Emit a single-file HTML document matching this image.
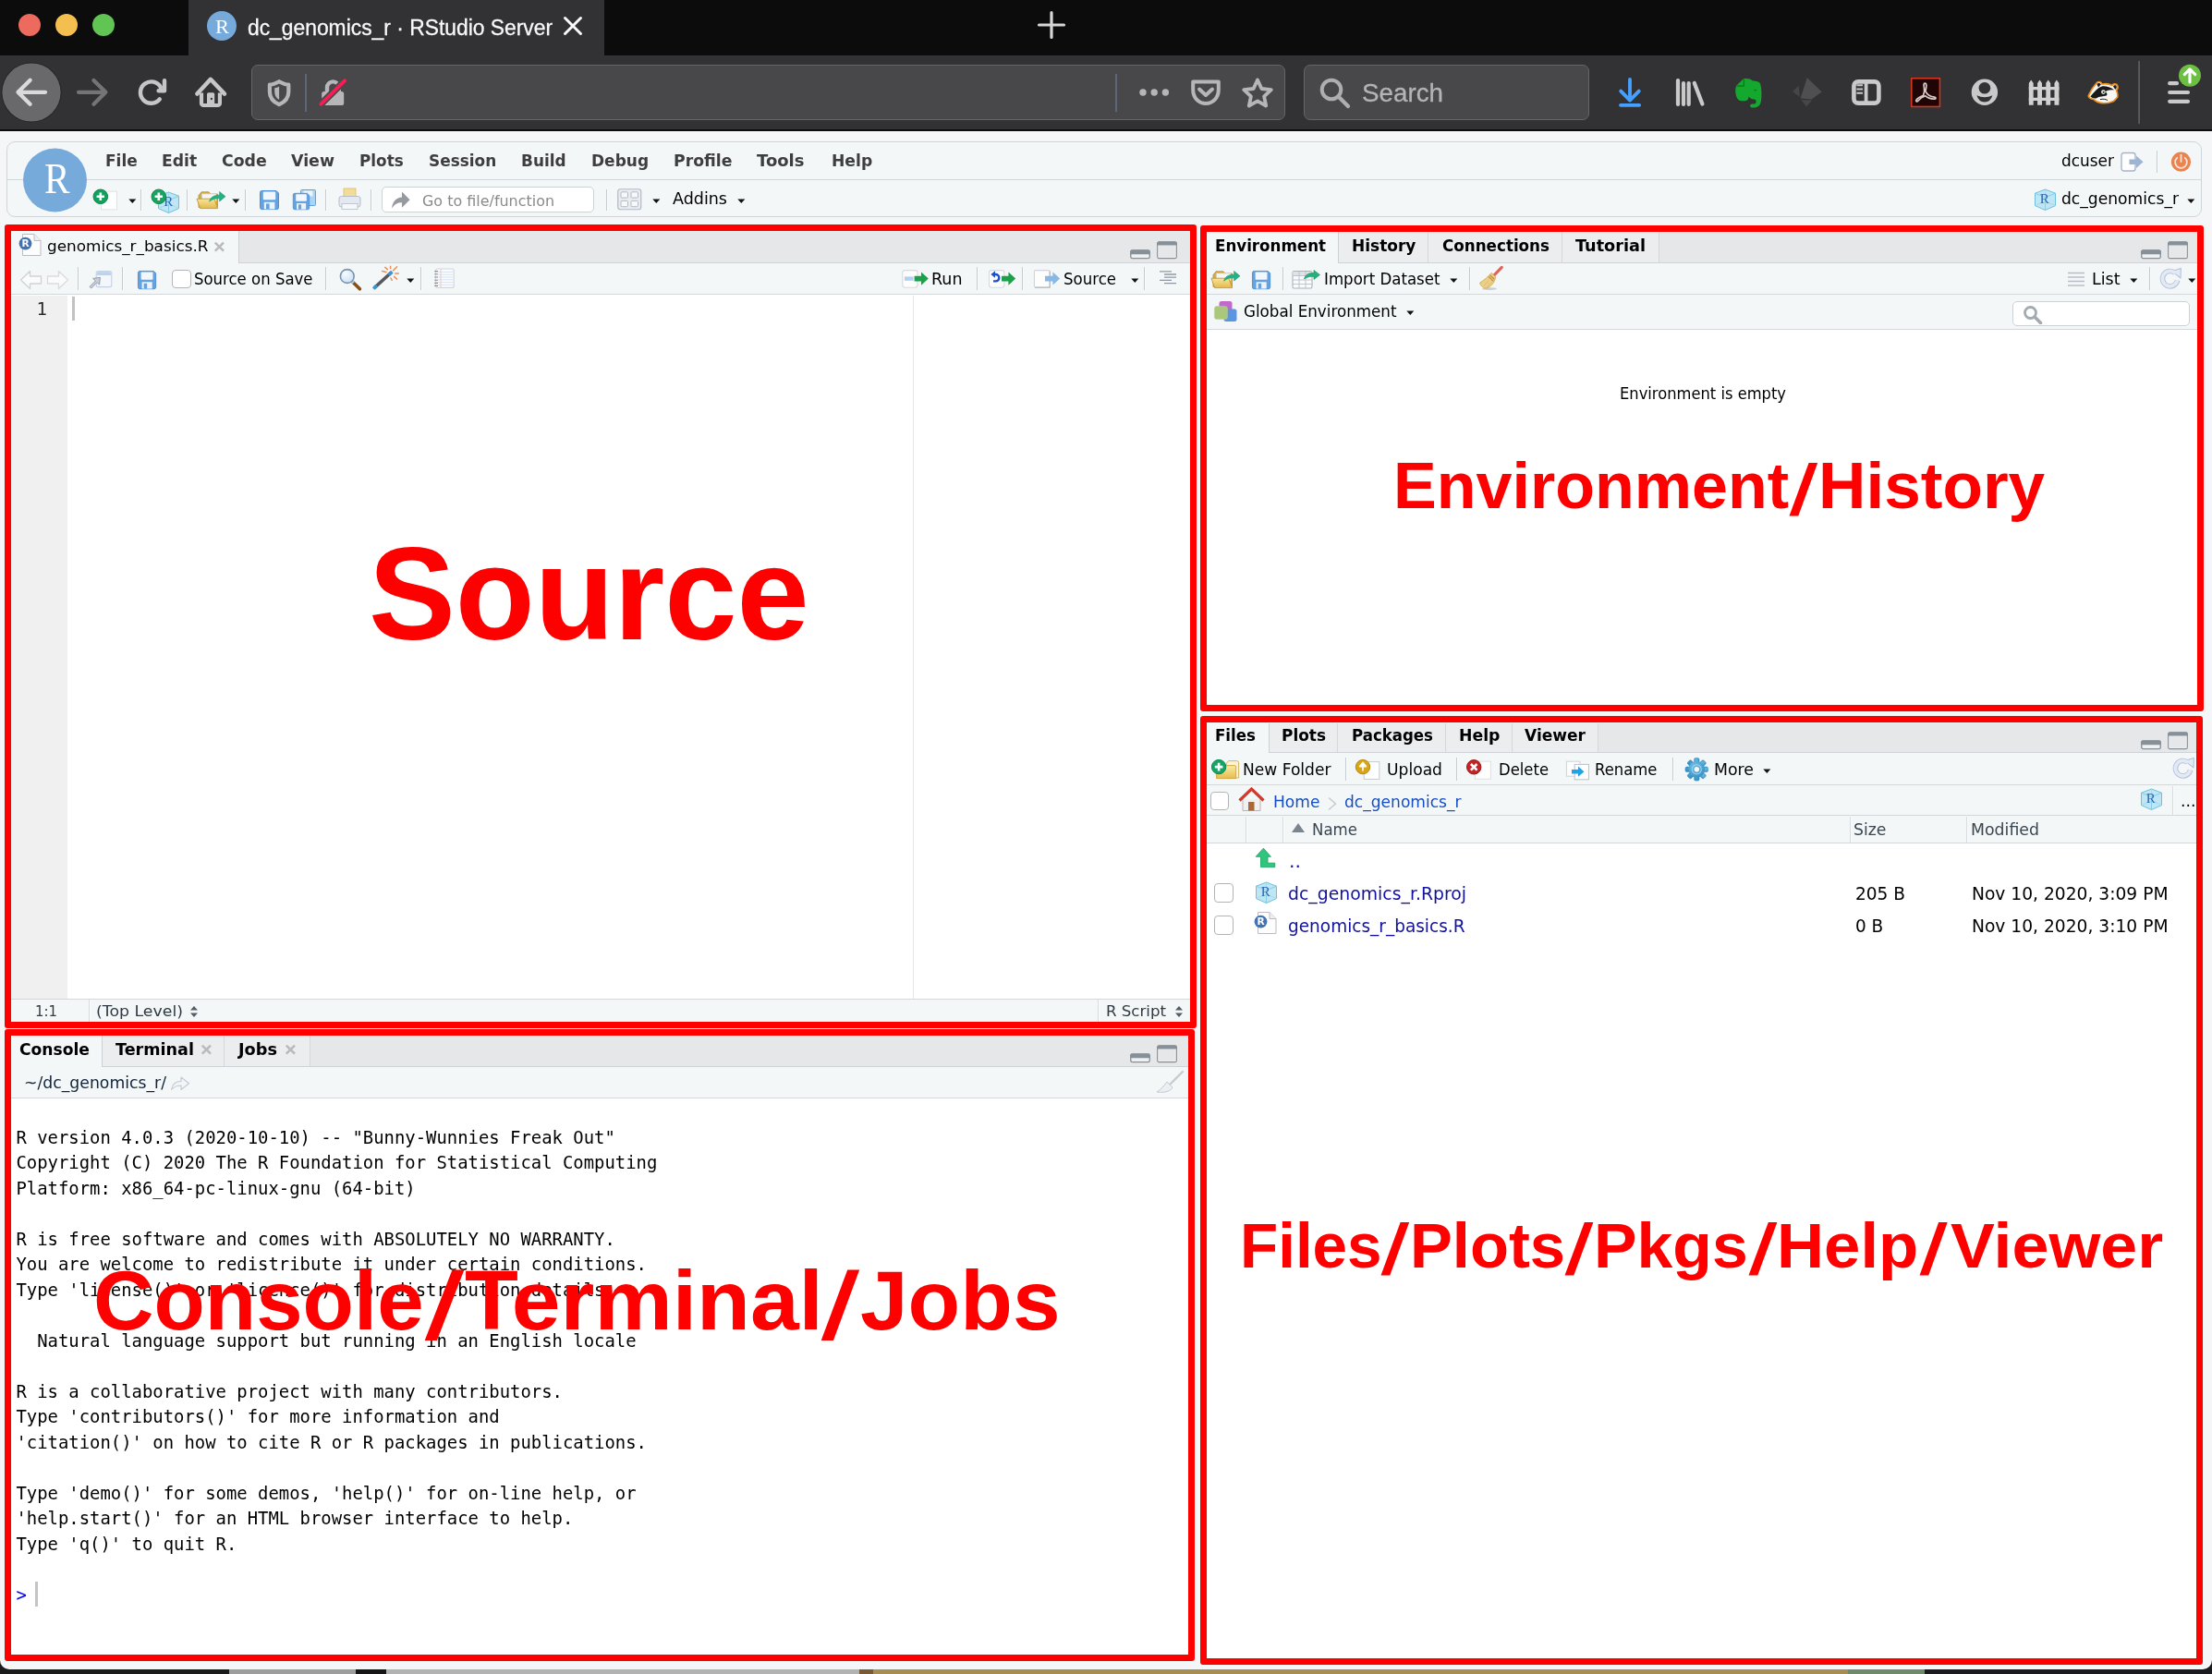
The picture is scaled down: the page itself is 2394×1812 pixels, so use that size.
<!DOCTYPE html>
<html lang="en"><head><meta charset="utf-8"><title>dc_genomics_r · RStudio Server</title>
<style>
html,body{margin:0;padding:0}
body{width:2394px;height:1812px;position:relative;overflow:hidden;background:#1c1c1e;will-change:transform;-webkit-font-smoothing:antialiased}
.a{position:absolute;box-sizing:border-box}
.t{position:absolute;white-space:pre;line-height:0;transform-origin:0 0;display:block}
.f-ui{font-family:"DejaVu Sans","Liberation Sans",sans-serif;font-weight:400}
.f-uib{font-family:"DejaVu Sans","Liberation Sans",sans-serif;font-weight:700}
.f-sf{font-family:"Liberation Sans",sans-serif;font-weight:400}
.f-sfb{font-family:"Liberation Sans",sans-serif;font-weight:700}
.f-mono{font-family:"DejaVu Sans Mono","Liberation Mono",monospace;font-weight:400}
.f-serif{font-family:"Liberation Serif",serif;font-weight:400}

</style></head>
<body>
<div id="desktop" aria-label="Desktop background">
<div class="a" style="left:0px;top:1800px;width:2394px;height:12px;background:linear-gradient(90deg,#1b1b1c 0,#1b1b1c 248px,#9d9d9d 248px,#9d9d9d 385px,#151515 385px,#151515 418px,#b2b2b2 418px,#b2b2b2 930px,#7a5a34 930px,#7a5a34 945px,#a88d52 945px,#a88d52 2000px,#6f8a6a 2000px,#6f8a6a 2083px,#1b1b1f 2083px);"></div>
</div>
<header id="browser-chrome" aria-label="Firefox window chrome">
<div class="a" style="left:0px;top:0px;width:2394px;height:60px;background:#0c0c0d;"></div>
<div class="a" style="left:204px;top:0px;width:450px;height:60px;background:#323234;"></div>
<div class="a" style="left:0px;top:60px;width:2394px;height:80px;background:#323234;"></div>
<div class="a" style="left:0px;top:140px;width:2394px;height:2px;background:#0c0c0d;"></div>
<div class="a" style="left:0px;top:142px;width:2394px;height:1665px;background:#f4f6f7;border-radius:0 0 10px 10px;"></div>
<svg class="a" style="left:0px;top:0px;" width="204" height="60" viewBox="0 0 204 60"><circle cx="32" cy="27" r="12" fill="#ed6a5e"/><circle cx="72" cy="27" r="12" fill="#f5bf4f"/><circle cx="112" cy="27" r="12" fill="#61c554"/></svg>
<svg class="a" style="left:224px;top:12px;" width="32" height="32" viewBox="0 0 32 32"><circle cx="16" cy="16" r="16" fill="#75aadb"/></svg>
<span class="t f-serif" id="t0" style="left:232.5px;top:29px;font-size:22px;color:#fff;transform:scaleX(1.0213);">R</span>
<span class="t f-sf" id="t1" style="left:268.0px;top:29.5px;font-size:24.4px;color:#f9f9fa;transform:scaleX(0.9363);-webkit-text-stroke:0.3px #f9f9fa;">dc_genomics_r · RStudio Server</span>
<svg class="a" style="left:608px;top:16px;" width="24" height="24" viewBox="0 0 24 24"><path d="M3.5 3.5L20.5 20.5M20.5 3.5L3.5 20.5" stroke="#f9f9fa" stroke-width="3" stroke-linecap="round" fill="none"/></svg>
<svg class="a" style="left:1120px;top:9px;" width="36" height="36" viewBox="0 0 36 36"><path d="M18 4.5V31.5M4.5 18H31.5" stroke="#d7d7d8" stroke-width="3.2" stroke-linecap="round" fill="none"/></svg>
<svg class="a" style="left:0px;top:60px;" width="2394" height="80" viewBox="0 0 2394 80"><circle cx="34" cy="40" r="32.6" fill="#252527"/><circle cx="34" cy="40" r="31.6" fill="#69696b"/><path d="M49 39.8H20M32.6 26.8L19.5 39.8L32.6 52.8" stroke="#dadadb" stroke-width="4.3" stroke-linecap="round" stroke-linejoin="round" fill="none"/><path d="M85 39.8H114M101.4 27L114.4 39.8L101.4 52.8" stroke="#747477" stroke-width="4.2" stroke-linecap="round" stroke-linejoin="round" fill="none"/><path d="M172.8 47.4A11.7 11.7 0 1 1 174 34.6" stroke="#c6c6c7" stroke-width="4.4" fill="none" stroke-linecap="round"/><path d="M178 27.2V38.2H171.6" fill="none" stroke="#c6c6c7" stroke-width="4.4" stroke-linejoin="round" stroke-linecap="round"/><path d="M213.4 41.6L227.9 25.8L243 41.6" stroke="#c6c6c7" stroke-width="4.5" fill="none" stroke-linecap="round" stroke-linejoin="round"/><path d="M218 40.6V51.7a2.3 2.3 0 0 0 2.3 2.3H235.6a2.3 2.3 0 0 0 2.3-2.3V40.6" stroke="#c6c6c7" stroke-width="4.2" fill="none"/><rect x="224" y="40.2" width="8.2" height="13" rx="1.6" fill="#c6c6c7"/><circle cx="228.9" cy="47" r="1.15" fill="#323234"/></svg>
<div class="a" style="left:272px;top:70px;width:1119px;height:60px;background:#48484a;border:1px solid #666668;border-radius:7px;"></div>
<svg class="a" style="left:272px;top:71px;" width="120" height="59" viewBox="0 0 120 59"><path d="M30.1 17.2C26 19.6 22.4 20.6 19.9 20.6V28.5C19.9 35 24 39.5 30.1 42.2C36.2 39.5 40.3 35 40.3 28.5V20.6C37.8 20.6 34.2 19.6 30.1 17.2Z" fill="none" stroke="#b6b6b8" stroke-width="4.2" stroke-linejoin="round"/><path d="M30.1 22.6V37C27 35.2 25.2 32.6 25.2 28.6V24.2C27 24.2 28.6 23.6 30.1 22.6Z" fill="#b6b6b8"/><path d="M82 31V23.8a6.4 6.4 0 0 1 12.8 0V31" fill="none" stroke="#b6b6b8" stroke-width="4.4"/><rect x="76.2" y="28" width="24" height="15" rx="2.6" fill="#b6b6b8"/><path d="M75.4 41.6L101 16.4" stroke="#48484a" stroke-width="7.4" stroke-linecap="round"/><path d="M75.4 41.6L101 16.4" stroke="#ff1a53" stroke-width="3.9" stroke-linecap="round"/></svg>
<div class="a" style="left:330.4px;top:79.5px;width:1.5px;height:41.0px;background:#5e6778;"></div>
<div class="a" style="left:1207.4px;top:79.5px;width:1.5px;height:41.0px;background:#5e6778;"></div>
<svg class="a" style="left:1230px;top:92px;" width="40" height="16" viewBox="0 0 40 16"><circle cx="7" cy="8" r="3.7" fill="#b6b6b8"/><circle cx="19.2" cy="8" r="3.7" fill="#b6b6b8"/><circle cx="31.4" cy="8" r="3.7" fill="#b6b6b8"/></svg>
<svg class="a" style="left:1287px;top:84px;" width="36" height="32" viewBox="0 0 36 32"><path d="M4.2 4.4H31.8V13C31.8 22 25.5 28 18 28C10.5 28 4.2 22 4.2 13Z" fill="none" stroke="#b6b6b8" stroke-width="4" stroke-linejoin="round"/><path d="M11 12.5L18 19L25 12.5" fill="none" stroke="#b6b6b8" stroke-width="4" stroke-linecap="round" stroke-linejoin="round"/></svg>
<svg class="a" style="left:1343px;top:83px;" width="36" height="35" viewBox="0 0 36 35"><path d="M18 3.5L22.4 13L32.8 14.2L25.1 21.3L27.2 31.5L18 26.4L8.8 31.5L10.9 21.3L3.2 14.2L13.6 13Z" fill="none" stroke="#b6b6b8" stroke-width="3.8" stroke-linejoin="round"/></svg>
<div class="a" style="left:1411px;top:70px;width:309px;height:60px;background:#48484a;border:1px solid #666668;border-radius:7px;"></div>
<svg class="a" style="left:1427px;top:83px;" width="36" height="36" viewBox="0 0 36 36"><circle cx="14" cy="14" r="10.3" fill="none" stroke="#aeaeb0" stroke-width="4"/><path d="M22 22L32 32" stroke="#aeaeb0" stroke-width="4.2" stroke-linecap="round"/></svg>
<span class="t f-sf" id="t2" style="left:1474.0px;top:101px;font-size:27px;color:#b4b4b6;transform:scaleX(1.0285);-webkit-text-stroke:0.3px #b4b4b6;">Search</span>
<svg class="a" style="left:1740px;top:60px;" width="654" height="80" viewBox="0 0 654 80"><path d="M24 26V48M14.2 38.6L24 48.6L33.8 38.6" stroke="#45a1ff" stroke-width="3.8" fill="none" stroke-linecap="round" stroke-linejoin="round"/><path d="M14 53.8H34.2" stroke="#45a1ff" stroke-width="3.8" stroke-linecap="round"/><path d="M76 27V53M82 30V53M87.7 30V53M93.8 30L102.4 52.6" stroke="#c9c9ca" stroke-width="4.2" stroke-linecap="round"/><path d="M147 25.2L139.4 32.6C137.6 36 138 42 140 46.2C141.6 49 145 49.6 148.4 49.2C151.6 48.8 152.6 46.6 152.4 44.4C153.6 46 155.4 47.2 158.4 47.6C161.4 48 161.2 52 159 52.4H156.4C153.6 52.4 153.4 56 156 56.4C161.2 57.2 165.2 55 166 49C166.8 43 166.6 36 165.2 31C164.4 28.4 160.6 27.6 157 27.6C155 25.2 150 24.6 147 25.2Z" fill="#15a82e"/><path d="M147.4 25.6V33H139.6" fill="none" stroke="#0b7a1c" stroke-width="1.3"/><ellipse cx="159.8" cy="37.6" rx="1.5" ry="0.9" fill="#0b7a1c"/><path d="M215.8 24L231.7 39.6L220.6 47.4L208.6 46.5Z" fill="#4f4f51"/><path d="M200.1 39L206.7 32.4L207.7 45Z" fill="#464648"/><path d="M209.2 48L221.2 48.6L215.2 55.5Z" fill="#464648"/><rect x="266.4" y="28.4" width="27" height="23.2" rx="4.6" fill="none" stroke="#c9c9ca" stroke-width="4.6"/><path d="M279.6 28V52" stroke="#c9c9ca" stroke-width="3.8"/><path d="M269.4 32.2H276M269.4 36.5H276M269.4 40.8H276" stroke="#c9c9ca" stroke-width="1.9"/><rect x="328.8" y="24.8" width="30.6" height="30.6" fill="#210405" stroke="#d5351f" stroke-width="1.6"/><path d="M343.2 30.2C345.6 30.2 345 34.6 343.8 38.6C346 43 350 44.8 353.6 45.2C355.6 45.4 355.4 47.4 353.2 47.2C349.2 46.8 345.6 45.4 343.8 43.8C341 44.6 338 46.4 336 49C334.8 50.6 333 49.8 334 48.2C335.6 45.8 339 44.2 341.6 43.2C342.6 40.8 343 37.8 342.4 34.4C341.8 31.8 342 30.2 343.2 30.2Z" fill="none" stroke="#d8cbc9" stroke-width="1.7"/><circle cx="407.9" cy="39.8" r="14.2" fill="#c9c9ca"/><circle cx="407.9" cy="35.2" r="6.3" fill="#323234"/><path d="M399.4 43.2Q407.9 47.4 416.4 43.2Q414.4 50.4 407.9 50.4Q401.4 50.4 399.4 43.2Z" fill="#323234"/><path d="M455.8 30L458.2 26.4L460.7 30V53.8H455.8ZM465.1 30L467.5 26.4L470 30V53.8H465.1ZM474.3 30L476.7 26.4L479.2 30V53.8H474.3ZM483.5 30L485.9 26.4L488.4 30V53.8H483.5Z" fill="#d0d0d1"/><path d="M455.8 35.6H488.4M455.8 47.4H488.4" stroke="#d0d0d1" stroke-width="3.4"/><g transform="translate(519,27)"><path d="M9.5 3.5C11.5 0.5 15 1 16 4C20 3.2 24 3.8 27 5.4C28.5 3 32.5 3.4 33 6.6C33.4 8.4 32.4 9.8 31.6 10.6C32.8 13.4 33 16.4 32.6 18.4C31 19.6 30.4 21.4 28.4 22.4C24 24.6 18 25 14.4 24.4C11 23.8 8.6 22.4 6.6 20.4C3.6 20.2 1 18.6 1.4 16.4C3.4 11.6 6 7.4 9.5 3.5Z" fill="#f8f6f2" stroke="#ec8a1c" stroke-width="1.7" stroke-linejoin="round"/><path d="M10.4 4.2C11.6 2.4 14 2.6 14.8 4.6L12 7.6ZM28 6.4C29.4 4.6 32 5.2 31.8 7.4C31.6 8.6 30.8 9.4 30.2 9.8Z" fill="#1a1a1a"/><path d="M3.4 17.6C7 12.6 12 7.4 16.4 6.2C21 6 25.6 7.4 29.4 10.6C25 9.8 21.6 10.6 19.6 12.4C21.4 13.2 22 15.2 20.8 16.6C17.6 17.2 13 17.4 9.6 19.4C7.6 19.8 5 19.2 3.4 17.6Z" fill="#1a1a1a"/><circle cx="17.4" cy="12.6" r="2.3" fill="#f8f6f2"/><circle cx="17.6" cy="12.8" r="1" fill="#1a1a1a"/><path d="M14 20.6C17 19.8 20.4 20.4 22 21.6" stroke="#1a1a1a" stroke-width="1" fill="none"/></g><rect x="574.2" y="6" width="1.8" height="68" fill="#5c5c5e"/><path d="M608.2 30.2H616M608.2 40H628M608.2 49.8H628" stroke="#c9c9ca" stroke-width="4.2" stroke-linecap="round"/><circle cx="630" cy="21.8" r="12" fill="#6cbf43"/><path d="M630 29V15.4M624.2 20.6L630 14.8L635.8 20.6" stroke="#fff" stroke-width="3.1" fill="none" stroke-linecap="round" stroke-linejoin="round"/></svg>
</header>
<main id="rstudio" aria-label="RStudio Server">
<nav id="rstudio-toolbar" aria-label="RStudio menu and toolbar">
<div class="a" style="left:7px;top:153px;width:2376.2px;height:82px;background:#f4f7f8;border:1px solid #d0d5d9;border-radius:9px;"></div>
<div class="a" style="left:8px;top:194px;width:2375px;height:1px;background:#d0d5d9;"></div>
<svg class="a" style="left:24px;top:160px;" width="72" height="72" viewBox="0 0 72 72"><circle cx="35.5" cy="35" r="34.5" fill="#75aadb"/></svg>
<span class="t f-serif" id="t3" style="left:47.5px;top:193.6px;font-size:46px;color:#fff;transform:scaleX(0.8961);">R</span>
<span class="t f-uib" id="t4" style="left:113.5px;top:173.6px;font-size:17px;color:#3e3e3e;transform:scaleX(0.9972);">File</span>
<span class="t f-uib" id="t5" style="left:175.0px;top:173.6px;font-size:17px;color:#3e3e3e;transform:scaleX(1.0119);">Edit</span>
<span class="t f-uib" id="t6" style="left:239.5px;top:173.6px;font-size:17px;color:#3e3e3e;transform:scaleX(1.0176);">Code</span>
<span class="t f-uib" id="t7" style="left:315.0px;top:173.6px;font-size:17px;color:#3e3e3e;transform:scaleX(1.0235);">View</span>
<span class="t f-uib" id="t8" style="left:389.0px;top:173.6px;font-size:17px;color:#3e3e3e;transform:scaleX(0.9892);">Plots</span>
<span class="t f-uib" id="t9" style="left:463.5px;top:173.6px;font-size:17px;color:#3e3e3e;transform:scaleX(0.9942);">Session</span>
<span class="t f-uib" id="t10" style="left:564.0px;top:173.6px;font-size:17px;color:#3e3e3e;transform:scaleX(0.9961);">Build</span>
<span class="t f-uib" id="t11" style="left:640.0px;top:173.6px;font-size:17px;color:#3e3e3e;">Debug</span>
<span class="t f-uib" id="t12" style="left:729.0px;top:173.6px;font-size:17px;color:#3e3e3e;transform:scaleX(1.0147);">Profile</span>
<span class="t f-uib" id="t13" style="left:819.0px;top:173.6px;font-size:17px;color:#3e3e3e;transform:scaleX(1.0584);">Tools</span>
<span class="t f-uib" id="t14" style="left:900.0px;top:173.6px;font-size:17px;color:#3e3e3e;transform:scaleX(1.0099);">Help</span>
<svg class="a" style="left:100px;top:204px;" width="30" height="26" viewBox="0 0 30 26"><rect x="9.5" y="3.2" width="17" height="19.6" fill="#fff" stroke="#dfe2e5" stroke-width="1"/><circle cx="8.8" cy="8.8" r="7.8" fill="#12a05c" stroke="#0d8a4c" stroke-width="1"/><path d="M8.8 4.6V13M4.6 8.8H13" stroke="#fff" stroke-width="2.6"/></svg>
<svg class="a" style="left:139px;top:215px;" width="9" height="6" viewBox="0 0 9 6"><path d="M0.3 0.6H8.3L4.3 5Z" fill="#111"/></svg>
<div class="a" style="left:152px;top:205px;width:1px;height:23px;background:#c6cbd0;box-shadow:1px 0 0 rgba(255,255,255,0.55);"></div>
<svg class="a" style="left:170px;top:207px;" width="25.0" height="24.5" viewBox="0 0 25 24.5"><path d="M12.5 1L23.5 5.2V18.6L12.5 23.5L1.5 18.6V5.2Z" fill="#bfe6f4" stroke="#6cc0de" stroke-width="1"/><path d="M1.5 5.2L12.5 9.6L23.5 5.2M12.5 9.6V23.5" fill="none" stroke="#7fcbe5" stroke-width="0.9"/><path d="M12.5 1V14L1.5 18.6M12.5 14L23.5 18.6" fill="none" stroke="#9ad6ea" stroke-width="0.7"/></svg>
<span class="t f-serif" id="t15" style="left:177.2px;top:218.2px;font-size:15.0px;color:#2b65b5;">R</span>
<svg class="a" style="left:163px;top:204px;" width="18" height="18" viewBox="0 0 18 18"><circle cx="8.8" cy="8.8" r="7.8" fill="#1aa260" stroke="#0d8a4c" stroke-width="1"/><path d="M8.8 4.6V13M4.6 8.8H13" stroke="#fff" stroke-width="2.6"/></svg>
<div class="a" style="left:202px;top:205px;width:1px;height:23px;background:#c6cbd0;box-shadow:1px 0 0 rgba(255,255,255,0.55);"></div>
<svg class="a" style="left:212px;top:203px;" width="33" height="26" viewBox="0 0 33 26"><defs><linearGradient id="fg" x1="0" y1="0" x2="0" y2="1"><stop offset="0" stop-color="#f9e596"/><stop offset="1" stop-color="#e2b94e"/></linearGradient></defs><path d="M3 8.5L6 4.8H14L16 7H23.5V21.5H3Z" fill="#d6ad45" stroke="#b98f28" stroke-width="0.8"/><path d="M6.5 6.8H22V15H6.5Z" fill="#f6f6f6" stroke="#cfcfcf" stroke-width="0.7"/><path d="M1 12.2H19.8L23.6 22.6H4.6Z" fill="url(#fg)" stroke="#c49a2c" stroke-width="0.9" stroke-linejoin="round"/><path d="M14.6 15.2C15.6 10.4 20 8 25.6 8.2V4.4L32 9.7L25.6 15V11.8C21.4 11.5 17.6 12.6 14.6 15.2Z" fill="#24b183" stroke="#149a6c" stroke-width="0.6"/></svg>
<svg class="a" style="left:251px;top:215px;" width="9" height="6" viewBox="0 0 9 6"><path d="M0.3 0.6H8.3L4.3 5Z" fill="#111"/></svg>
<div class="a" style="left:265px;top:205px;width:1px;height:23px;background:#c6cbd0;box-shadow:1px 0 0 rgba(255,255,255,0.55);"></div>
<svg class="a" style="left:280px;top:205px;" width="23.0" height="24.0" viewBox="0 0 23 24"><path d="M1.5 3.5A2 2 0 0 1 3.5 1.5H19L21.5 4V19.6a2 2 0 0 1-2 2H3.5A2 2 0 0 1 1.5 19.6Z" fill="#65a3e0" stroke="#4f8fd6" stroke-width="1"/><rect x="4.8" y="2.6" width="13.4" height="8.6" rx="0.8" fill="#f2f7fd"/><rect x="5.8" y="13.8" width="11.6" height="7.6" fill="#edf3fb"/><rect x="8" y="15.4" width="3.6" height="6" fill="#65a3e0"/></svg>
<svg class="a" style="left:316px;top:204px;" width="27" height="25" viewBox="0 0 27 25"><rect x="9.5" y="1.5" width="16" height="17" rx="1" fill="#a9d5f5" stroke="#5ba3de" stroke-width="1"/><rect x="12.5" y="2.5" width="10" height="6" fill="#eaf4fd"/><g transform="translate(0,4) scale(0.87)"><path d="M1.5 3.5A2 2 0 0 1 3.5 1.5H19L21.5 4V19.6a2 2 0 0 1-2 2H3.5A2 2 0 0 1 1.5 19.6Z" fill="#65a3e0" stroke="#4f8fd6" stroke-width="1"/><rect x="4.8" y="2.6" width="13.4" height="8.6" rx="0.8" fill="#f2f7fd"/><rect x="5.8" y="13.8" width="11.6" height="7.6" fill="#edf3fb"/><rect x="8" y="15.4" width="3.6" height="6" fill="#65a3e0"/></g></svg>
<div class="a" style="left:352px;top:205px;width:1px;height:23px;background:#c6cbd0;box-shadow:1px 0 0 rgba(255,255,255,0.55);"></div>
<svg class="a" style="left:366px;top:203px;" width="25" height="26" viewBox="0 0 25 26"><rect x="6" y="1" width="13" height="10" fill="#f3dc9a" stroke="#d8bd6c" stroke-width="0.8"/><rect x="1" y="9.5" width="23" height="11.5" rx="2.5" fill="#e4e8ef" stroke="#b5bdca" stroke-width="1"/><rect x="4" y="17.5" width="17" height="6" fill="#f5f7fa" stroke="#b5bdca" stroke-width="0.8"/></svg>
<div class="a" style="left:401px;top:205px;width:1px;height:23px;background:#c6cbd0;box-shadow:1px 0 0 rgba(255,255,255,0.55);"></div>
<div class="a" style="left:412.5px;top:202px;width:230.0px;height:27.5px;background:#fff;border:1px solid #cdd2d6;border-radius:5px;"></div>
<svg class="a" style="left:423px;top:206px;" width="22" height="21" viewBox="0 0 22 21"><path d="M1 19.5C2 12 6 8 12 7.6V1.5L20.6 10.2L12 18.8V13.2C7 13.2 4 15 1 19.5Z" fill="#96999f"/></svg>
<span class="t f-ui" id="t16" style="left:456.5px;top:217.7px;font-size:15.5px;color:#8a8a8a;transform:scaleX(1.0283);">Go to file/function</span>
<div class="a" style="left:656px;top:205px;width:1px;height:23px;background:#c6cbd0;box-shadow:1px 0 0 rgba(255,255,255,0.55);"></div>
<svg class="a" style="left:668px;top:204px;" width="27" height="24" viewBox="0 0 27 24"><rect x="0.75" y="0.75" width="25" height="22" rx="2.5" fill="#e9ecf1" stroke="#b3bac6" stroke-width="1.2"/><rect x="4" y="3.8" width="7.5" height="6.3" rx="1" fill="#f7f8fa" stroke="#b3bac6"/><rect x="15" y="3.8" width="7.5" height="6.3" rx="1" fill="#f7f8fa" stroke="#b3bac6"/><rect x="4" y="13.4" width="7.5" height="6.3" rx="1" fill="#f7f8fa" stroke="#b3bac6"/><rect x="15" y="13.4" width="7.5" height="6.3" rx="1" fill="#f7f8fa" stroke="#b3bac6"/></svg>
<svg class="a" style="left:706px;top:215px;" width="9" height="6" viewBox="0 0 9 6"><path d="M0.3 0.6H8.3L4.3 5Z" fill="#111"/></svg>
<span class="t f-ui" id="t17" style="left:727.5px;top:215px;font-size:17px;color:#000;transform:scaleX(1.03);">Addins</span>
<svg class="a" style="left:797.5px;top:215px;" width="9" height="6" viewBox="0 0 9 6"><path d="M0.3 0.6H8.3L4.3 5Z" fill="#111"/></svg>
<span class="t f-ui" id="t18" style="left:2231.0px;top:173.6px;font-size:17px;color:#000;transform:scaleX(0.9962);">dcuser</span>
<svg class="a" style="left:2295px;top:164px;" width="26" height="23" viewBox="0 0 26 23"><rect x="1" y="1.5" width="15" height="19.5" rx="2.5" fill="#fdfdfe" stroke="#a6b4cb" stroke-width="1.4"/><path d="M9.5 8.5H17V4.5L24.5 11.2L17 18V14H9.5Z" fill="#9db4d2"/></svg>
<div class="a" style="left:2334px;top:163px;width:1px;height:24px;background:#c6cbd0;box-shadow:1px 0 0 rgba(255,255,255,0.55);"></div>
<svg class="a" style="left:2349px;top:164px;" width="23" height="23" viewBox="0 0 23 23"><circle cx="11.5" cy="11.2" r="10.6" fill="#e9834f"/><path d="M7.2 6.8A6.4 6.4 0 1 0 15.8 6.8" fill="none" stroke="#fbe3d3" stroke-width="1.8" stroke-linecap="round"/><path d="M11.5 3.6V11" stroke="#fbe3d3" stroke-width="1.8" stroke-linecap="round"/></svg>
<svg class="a" style="left:2200.5px;top:203.5px;" width="25.0" height="24.5" viewBox="0 0 25 24.5"><path d="M12.5 1L23.5 5.2V18.6L12.5 23.5L1.5 18.6V5.2Z" fill="#bfe6f4" stroke="#6cc0de" stroke-width="1"/><path d="M1.5 5.2L12.5 9.6L23.5 5.2M12.5 9.6V23.5" fill="none" stroke="#7fcbe5" stroke-width="0.9"/><path d="M12.5 1V14L1.5 18.6M12.5 14L23.5 18.6" fill="none" stroke="#9ad6ea" stroke-width="0.7"/></svg>
<span class="t f-serif" id="t19" style="left:2207.7px;top:214.7px;font-size:15.0px;color:#2b65b5;">R</span>
<span class="t f-ui" id="t20" style="left:2231.0px;top:215px;font-size:17px;color:#000;transform:scaleX(1.0076);">dc_genomics_r</span>
<svg class="a" style="left:2367px;top:215px;" width="9" height="6" viewBox="0 0 9 6"><path d="M0.3 0.6H8.3L4.3 5Z" fill="#111"/></svg>
</nav>
<section id="source-pane" aria-label="Source">
<div class="a" style="left:12px;top:250px;width:1276px;height:856px;background:#fff;"></div>
<div class="a" style="left:12px;top:250px;width:1276px;height:34.5px;background:#e6e7e9;"></div>
<div class="a" style="left:12px;top:283.5px;width:1276px;height:1.0px;background:#cfd3d7;"></div>
<div class="a" style="left:12px;top:250px;width:246.5px;height:34.5px;background:#f4f7f8;border-right:1px solid #cdd1d5;"></div>
<span class="t f-ui" id="t21" style="left:51.0px;top:266.5px;font-size:16.6px;color:#000;transform:scaleX(1.0151);">genomics_r_basics.R</span>
<svg class="a" style="left:19px;top:251.5px;" width="27" height="26" viewBox="0 0 27 26"><path d="M5.5 1.5H18L25 8.5V24.5H5.5Z" fill="#fdfdfd" stroke="#b9bcc0" stroke-width="1"/><path d="M18 1.5V8.5H25" fill="#eceef0" stroke="#b9bcc0" stroke-width="1"/><circle cx="8.5" cy="11.6" r="6.9" fill="#4272b4"/></svg>
<span class="t f-uib" id="t22" style="left:23.6px;top:262.8px;font-size:10.6px;color:#fff;">R</span>
<svg class="a" style="left:231px;top:260.5px;" width="13" height="12" viewBox="0 0 13 12"><path d="M1.8 1.6L11 10.6M11 1.6L1.8 10.6" stroke="#bababa" stroke-width="2.5" fill="none"/></svg>
<svg class="a" style="left:1223px;top:269.7px;" width="23" height="11" viewBox="0 0 23 11"><rect x="0.75" y="0.95" width="20.5" height="8.6" rx="1.6" fill="#eff0f2" stroke="#869098" stroke-width="1.3"/><path d="M0.2 5.2V2.6A2.2 2.2 0 0 1 2.4 0.4H19.6A2.2 2.2 0 0 1 21.8 2.6V5.2Z" fill="#869098"/></svg>
<svg class="a" style="left:1252px;top:260.7px;" width="23" height="20" viewBox="0 0 23 20"><rect x="0.75" y="0.95" width="20.5" height="17.6" rx="1.6" fill="none" stroke="#869098" stroke-width="1.3"/><rect x="1.9" y="4.4" width="18.2" height="13" fill="none" stroke="#f1f2f3" stroke-width="0.8"/><path d="M0.2 4.4V2.6A2.2 2.2 0 0 1 2.4 0.4H19.6A2.2 2.2 0 0 1 21.8 2.6V4.4Z" fill="#869098"/></svg>
<div class="a" style="left:12px;top:284.5px;width:1276px;height:34.0px;background:#f4f7f8;border-bottom:1px solid #d3d7da;"></div>
<svg class="a" style="left:21px;top:291.2px;" width="26" height="24" viewBox="0 0 26 24"><path d="M1.5 12L11.5 2.5V8H23.5V16H11.5V21.5Z" fill="#fbfbfb" stroke="#cfd2d5" stroke-width="1.3" stroke-linejoin="round"/></svg>
<svg class="a" style="left:49px;top:291.2px;" width="26" height="24" viewBox="0 0 26 24"><path d="M24.5 12L14.5 2.5V8H2.5V16H14.5V21.5Z" fill="#fbfbfb" stroke="#d9dcde" stroke-width="1.3" stroke-linejoin="round"/></svg>
<div class="a" style="left:84px;top:289px;width:1px;height:25px;background:#c6cbd0;box-shadow:1px 0 0 rgba(255,255,255,0.55);"></div>
<svg class="a" style="left:95px;top:292px;" width="28" height="22" viewBox="0 0 28 22"><rect x="9.2" y="1.6" width="16.6" height="17" rx="2.2" fill="#f3f6fa" stroke="#c3d0e2" stroke-width="1.1"/><path d="M9.8 4.2A2 2 0 0 1 11.8 2.2H23.2A2 2 0 0 1 25.2 4.2V6H9.8Z" fill="#b9d4f1"/><path d="M2 18.4L8.4 12L5.6 9.4L13.4 8.4L12.6 16.2L10 13.6L3.8 20Z" fill="#c9cfd9" stroke="#8b95a6" stroke-width="0.9" stroke-linejoin="round"/></svg>
<div class="a" style="left:132px;top:289px;width:1px;height:25px;background:#c6cbd0;box-shadow:1px 0 0 rgba(255,255,255,0.55);"></div>
<svg class="a" style="left:148px;top:291.8px;" width="22.1" height="23.0" viewBox="0 0 23 24"><path d="M1.5 3.5A2 2 0 0 1 3.5 1.5H19L21.5 4V19.6a2 2 0 0 1-2 2H3.5A2 2 0 0 1 1.5 19.6Z" fill="#65a3e0" stroke="#4f8fd6" stroke-width="1"/><rect x="4.8" y="2.6" width="13.4" height="8.6" rx="0.8" fill="#f2f7fd"/><rect x="5.8" y="13.8" width="11.6" height="7.6" fill="#edf3fb"/><rect x="8" y="15.4" width="3.6" height="6" fill="#65a3e0"/></svg>
<div class="a" style="left:186px;top:291.5px;width:20.5px;height:20.5px;background:#fff;border:1px solid #b4b4b4;border-radius:4px;"></div>
<span class="t f-ui" id="t23" style="left:210.0px;top:302px;font-size:17px;color:#000;transform:scaleX(0.9727);">Source on Save</span>
<div class="a" style="left:352px;top:289px;width:1px;height:25px;background:#c6cbd0;box-shadow:1px 0 0 rgba(255,255,255,0.55);"></div>
<svg class="a" style="left:365px;top:288px;" width="28" height="28" viewBox="0 0 28 28"><defs><radialGradient id="lg" cx="0.35" cy="0.3" r="0.8"><stop offset="0" stop-color="#f6fbff"/><stop offset="1" stop-color="#c9def5"/></radialGradient></defs><path d="M16.2 16.8L24.4 24.8" stroke="#8a4f14" stroke-width="3.6" stroke-linecap="round"/><path d="M15.4 16L17.6 18.2" stroke="#9fd0ea" stroke-width="3.4"/><circle cx="10.8" cy="11" r="7.4" fill="url(#lg)" stroke="#7a94ab" stroke-width="1.6"/></svg>
<svg class="a" style="left:401px;top:286px;" width="34" height="30" viewBox="0 0 34 30"><path d="M4.4 25.4L22.4 9" stroke="#56585c" stroke-width="3.5"/><path d="M3.2 26.5L6.8 23.2" stroke="#3f93cf" stroke-width="3.7"/><path d="M19.6 11.6L23.4 8.2" stroke="#3f93cf" stroke-width="3.7"/><path d="M15.8 3.4L18.4 5.6M21.6 2.2V4.6M24.6 6.8L28.6 2.8M26.6 10H30.4M25.6 13.4L28.6 16.2M22 15L23.2 17.4M12.6 7.4L17 8.4" stroke="#f58b4c" stroke-width="1.5" stroke-linecap="round"/></svg>
<svg class="a" style="left:440px;top:301px;" width="9" height="6" viewBox="0 0 9 6"><path d="M0.3 0.6H8.3L4.3 5Z" fill="#111"/></svg>
<div class="a" style="left:455px;top:289px;width:1px;height:25px;background:#c6cbd0;box-shadow:1px 0 0 rgba(255,255,255,0.55);"></div>
<svg class="a" style="left:469px;top:290.4px;" width="24" height="23" viewBox="0 0 24 23"><rect x="2.6" y="1" width="19.6" height="20.4" rx="2" fill="#fbfcfe" stroke="#d2d5d9" stroke-width="1.1"/><path d="M4 4.4H21.6M4 7.2H21.6M4 10H21.6M4 12.8H21.6M4 15.6H21.6M4 18.4H21.6" stroke="#d3e0f3" stroke-width="0.9"/><path d="M8 1.5V21" stroke="#f3b9b0" stroke-width="0.8"/><path d="M1.2 3.6H5M1.2 6.8H5M1.2 10H5M1.2 13.2H5M1.2 16.4H5M1.2 19.4H5" stroke="#8d9299" stroke-width="1.1"/></svg>
<svg class="a" style="left:975px;top:291px;" width="34" height="22" viewBox="0 0 34 22"><rect x="1.8" y="1.6" width="16.2" height="18.6" rx="2.6" fill="#fdfdfe" stroke="#d6dade" stroke-width="1.1"/><rect x="4" y="8.4" width="9.6" height="4.4" fill="#b3cff3"/><path d="M14.6 7.8H22V3.4L29.8 10.6L22 17.8V13.4H14.6Z" fill="#19a24a"/></svg>
<span class="t f-ui" id="t24" style="left:1008.0px;top:302px;font-size:17px;color:#000;transform:scaleX(1.0273);">Run</span>
<div class="a" style="left:1057px;top:289px;width:1px;height:25px;background:#c6cbd0;box-shadow:1px 0 0 rgba(255,255,255,0.55);"></div>
<svg class="a" style="left:1069px;top:291px;" width="33" height="22" viewBox="0 0 33 22"><rect x="1.5" y="1.6" width="16.4" height="18.6" rx="2.6" fill="#fdfdfe" stroke="#d6dade" stroke-width="1.1"/><path d="M6 13.4H8.6A3.7 3.7 0 0 0 8.6 6H6.4" fill="none" stroke="#1c50cf" stroke-width="2.4"/><path d="M8 2.2L3.4 6L8 9.8Z" fill="#1c50cf"/><path d="M15 7.8H22.4V3.4L30.2 10.6L22.4 17.8V13.4H15Z" fill="#19a24a"/></svg>
<div class="a" style="left:1106px;top:289px;width:1px;height:25px;background:#c6cbd0;box-shadow:1px 0 0 rgba(255,255,255,0.55);"></div>
<svg class="a" style="left:1118px;top:291px;" width="31" height="22" viewBox="0 0 31 22"><rect x="1.4" y="1.6" width="16.8" height="18.6" rx="1.6" fill="#fdfdfe" stroke="#d0d4d9" stroke-width="1.1"/><path d="M2 20.2H18.2V2.4" fill="none" stroke="#b3b9c1" stroke-width="1.2"/><path d="M13 7.8H21.4V3.6L29.2 10.6L21.4 17.6V13.4H13Z" fill="#86b9e6"/></svg>
<span class="t f-ui" id="t25" style="left:1151.0px;top:302px;font-size:17px;color:#000;transform:scaleX(0.9762);">Source</span>
<svg class="a" style="left:1224px;top:301px;" width="9" height="6" viewBox="0 0 9 6"><path d="M0.3 0.6H8.3L4.3 5Z" fill="#111"/></svg>
<div class="a" style="left:1238px;top:289px;width:1px;height:25px;background:#c6cbd0;box-shadow:1px 0 0 rgba(255,255,255,0.55);"></div>
<svg class="a" style="left:1254px;top:292px;" width="20" height="17" viewBox="0 0 20 17"><path d="M1 1.8H14M6 5H19M6 8.2H19M1 11.4H14M6 14.6H19" stroke="#8d99a4" stroke-width="1.3"/></svg>
<div class="a" style="left:12px;top:319.5px;width:61px;height:761.5px;background:#f0f0f0;"></div>
<span class="t f-mono" id="t26" style="left:39.55px;top:333.6px;font-size:19px;color:#2b2b2b;">1</span>
<div class="a" style="left:78.2px;top:320.5px;width:2.4px;height:26.5px;background:#c2c2c2;"></div>
<div class="a" style="left:988px;top:319.5px;width:1px;height:761.5px;background:#e4e6e8;"></div>
<div class="a" style="left:12px;top:1081px;width:1276px;height:25px;background:#f4f7f8;border-top:1px solid #d3d7da;"></div>
<span class="t f-ui" id="t27" style="left:38.0px;top:1094.6px;font-size:16.6px;color:#2f3a42;transform:scaleX(0.8982);">1:1</span>
<div class="a" style="left:96px;top:1082px;width:1px;height:24px;background:#d8dcdf;box-shadow:1px 0 0 rgba(255,255,255,0.55);"></div>
<span class="t f-ui" id="t28" style="left:104.0px;top:1094.6px;font-size:16.6px;color:#2f3a42;transform:scaleX(1.0441);">(Top Level)</span>
<svg class="a" style="left:205px;top:1088px;" width="10" height="14" viewBox="0 0 10 14"><path d="M1 5.6L5 1L9 5.6ZM1 8.4L5 13L9 8.4Z" fill="#555d66"/></svg>
<div class="a" style="left:1188px;top:1082px;width:1px;height:24px;background:#d8dcdf;box-shadow:1px 0 0 rgba(255,255,255,0.55);"></div>
<span class="t f-ui" id="t29" style="left:1197.0px;top:1094.6px;font-size:16.6px;color:#2f3a42;">R Script</span>
<svg class="a" style="left:1270.5px;top:1088px;" width="10" height="14" viewBox="0 0 10 14"><path d="M1 5.6L5 1L9 5.6ZM1 8.4L5 13L9 8.4Z" fill="#555d66"/></svg>
</section>
<section id="console-pane" aria-label="Console">
<div class="a" style="left:12px;top:1121px;width:1274px;height:671px;background:#fff;"></div>
<div class="a" style="left:12px;top:1121px;width:1274px;height:33.5px;background:#e6e7e9;"></div>
<div class="a" style="left:12px;top:1153.5px;width:1274px;height:1.0px;background:#cfd3d7;"></div>
<div class="a" style="left:12px;top:1121px;width:98.5px;height:33.5px;background:#f4f7f8;border-right:1px solid #cdd1d5;"></div>
<span class="t f-uib" id="t30" style="left:21.0px;top:1135.6px;font-size:17px;color:#000;transform:scaleX(1.0077);">Console</span>
<div class="a" style="left:110.5px;top:1121px;width:132.5px;height:32.5px;background:#ecedef;border-right:1px solid #d5d8db;"></div>
<span class="t f-uib" id="t31" style="left:125.0px;top:1135.6px;font-size:17px;color:#000;transform:scaleX(1.034);">Terminal</span>
<svg class="a" style="left:217px;top:1130.0px;" width="13" height="12" viewBox="0 0 13 12"><path d="M1.8 1.6L11 10.6M11 1.6L1.8 10.6" stroke="#bababa" stroke-width="2.6" fill="none"/></svg>
<div class="a" style="left:243px;top:1121px;width:92.5px;height:32.5px;background:#ecedef;border-right:1px solid #d5d8db;"></div>
<span class="t f-uib" id="t32" style="left:258.0px;top:1135.6px;font-size:17px;color:#000;transform:scaleX(1.0423);">Jobs</span>
<svg class="a" style="left:308px;top:1130.0px;" width="13" height="12" viewBox="0 0 13 12"><path d="M1.8 1.6L11 10.6M11 1.6L1.8 10.6" stroke="#bababa" stroke-width="2.6" fill="none"/></svg>
<svg class="a" style="left:1223px;top:1139.5px;" width="23" height="11" viewBox="0 0 23 11"><rect x="0.75" y="0.95" width="20.5" height="8.6" rx="1.6" fill="#eff0f2" stroke="#869098" stroke-width="1.3"/><path d="M0.2 5.2V2.6A2.2 2.2 0 0 1 2.4 0.4H19.6A2.2 2.2 0 0 1 21.8 2.6V5.2Z" fill="#869098"/></svg>
<svg class="a" style="left:1252px;top:1130.5px;" width="23" height="20" viewBox="0 0 23 20"><rect x="0.75" y="0.95" width="20.5" height="17.6" rx="1.6" fill="none" stroke="#869098" stroke-width="1.3"/><rect x="1.9" y="4.4" width="18.2" height="13" fill="none" stroke="#f1f2f3" stroke-width="0.8"/><path d="M0.2 4.4V2.6A2.2 2.2 0 0 1 2.4 0.4H19.6A2.2 2.2 0 0 1 21.8 2.6V4.4Z" fill="#869098"/></svg>
<div class="a" style="left:12px;top:1154.5px;width:1274px;height:34.5px;background:#f4f7f8;border-bottom:1px solid #d3d7da;"></div>
<span class="t f-ui" id="t33" style="left:26.0px;top:1171.8px;font-size:17.6px;color:#10233a;transform:scaleX(0.9806);">~/dc_genomics_r/</span>
<svg class="a" style="left:184px;top:1163.5px;" width="22" height="17" viewBox="0 0 22 17"><path d="M1.5 15.5C2.5 9.5 6.5 6.5 12 6.5V2L20.5 8.8L12 15.5V11C7.5 11 4.5 12 1.5 15.5Z" fill="#f3f5f7" stroke="#c3c9d0" stroke-width="1.1" stroke-linejoin="round"/></svg>
<svg class="a" style="left:1250px;top:1158px;" width="32" height="26" viewBox="0 0 32 26"><path d="M30 2L17 15" stroke="#c8ccd2" stroke-width="2.4" stroke-linecap="round"/><path d="M13 13L19 19C17 23 12 25 2 24C7 21 10 17 13 13Z" fill="#eceef1" stroke="#c3c8cf" stroke-width="1"/></svg>
<span class="t f-mono" id="t34" style="left:17.5px;top:1230.6px;font-size:18.9px;color:#000;">R version 4.0.3 (2020-10-10) -- &quot;Bunny-Wunnies Freak Out&quot;</span>
<span class="t f-mono" id="t35" style="left:17.5px;top:1258.11px;font-size:18.9px;color:#000;">Copyright (C) 2020 The R Foundation for Statistical Computing</span>
<span class="t f-mono" id="t36" style="left:17.5px;top:1285.62px;font-size:18.9px;color:#000;">Platform: x86_64-pc-linux-gnu (64-bit)</span>
<span class="t f-mono" id="t37" style="left:17.5px;top:1340.64px;font-size:18.9px;color:#000;">R is free software and comes with ABSOLUTELY NO WARRANTY.</span>
<span class="t f-mono" id="t38" style="left:17.5px;top:1368.15px;font-size:18.9px;color:#000;">You are welcome to redistribute it under certain conditions.</span>
<span class="t f-mono" id="t39" style="left:17.5px;top:1395.66px;font-size:18.9px;color:#000;">Type &#x27;license()&#x27; or &#x27;licence()&#x27; for distribution details.</span>
<span class="t f-mono" id="t40" style="left:17.5px;top:1450.68px;font-size:18.9px;color:#000;">  Natural language support but running in an English locale</span>
<span class="t f-mono" id="t41" style="left:17.5px;top:1505.7px;font-size:18.9px;color:#000;">R is a collaborative project with many contributors.</span>
<span class="t f-mono" id="t42" style="left:17.5px;top:1533.21px;font-size:18.9px;color:#000;">Type &#x27;contributors()&#x27; for more information and</span>
<span class="t f-mono" id="t43" style="left:17.5px;top:1560.72px;font-size:18.9px;color:#000;">&#x27;citation()&#x27; on how to cite R or R packages in publications.</span>
<span class="t f-mono" id="t44" style="left:17.5px;top:1615.74px;font-size:18.9px;color:#000;">Type &#x27;demo()&#x27; for some demos, &#x27;help()&#x27; for on-line help, or</span>
<span class="t f-mono" id="t45" style="left:17.5px;top:1643.25px;font-size:18.9px;color:#000;">&#x27;help.start()&#x27; for an HTML browser interface to help.</span>
<span class="t f-mono" id="t46" style="left:17.5px;top:1670.76px;font-size:18.9px;color:#000;">Type &#x27;q()&#x27; to quit R.</span>
<span class="t f-mono" id="t47" style="left:17.5px;top:1725.78px;font-size:18.9px;color:#0000ff;">&gt;</span>
<div class="a" style="left:37.7px;top:1712px;width:2.9px;height:27px;background:#c4c4c4;"></div>
</section>
<section id="environment-pane" aria-label="Environment">
<div class="a" style="left:1306px;top:251px;width:1072px;height:512.5px;background:#fff;"></div>
<div class="a" style="left:1306px;top:251px;width:1072px;height:33.5px;background:#e6e7e9;"></div>
<div class="a" style="left:1306px;top:283.5px;width:1072px;height:1.0px;background:#cfd3d7;"></div>
<div class="a" style="left:1306px;top:251px;width:142.5px;height:33.5px;background:#f4f7f8;border-right:1px solid #cdd1d5;"></div>
<span class="t f-uib" id="t48" style="left:1315.0px;top:265.8px;font-size:17px;color:#000;transform:scaleX(0.9815);">Environment</span>
<div class="a" style="left:1448.5px;top:251px;width:97.5px;height:32.5px;background:#ecedef;border-right:1px solid #d5d8db;"></div>
<span class="t f-uib" id="t49" style="left:1463.0px;top:265.8px;font-size:17px;color:#000;">History</span>
<div class="a" style="left:1546px;top:251px;width:145px;height:32.5px;background:#ecedef;border-right:1px solid #d5d8db;"></div>
<span class="t f-uib" id="t50" style="left:1560.5px;top:265.8px;font-size:17px;color:#000;transform:scaleX(0.9845);">Connections</span>
<div class="a" style="left:1691px;top:251px;width:105px;height:32.5px;background:#ecedef;border-right:1px solid #d5d8db;"></div>
<span class="t f-uib" id="t51" style="left:1705.0px;top:265.8px;font-size:17px;color:#000;transform:scaleX(1.0389);">Tutorial</span>
<svg class="a" style="left:2317px;top:269.7px;" width="23" height="11" viewBox="0 0 23 11"><rect x="0.75" y="0.95" width="20.5" height="8.6" rx="1.6" fill="#eff0f2" stroke="#869098" stroke-width="1.3"/><path d="M0.2 5.2V2.6A2.2 2.2 0 0 1 2.4 0.4H19.6A2.2 2.2 0 0 1 21.8 2.6V5.2Z" fill="#869098"/></svg>
<svg class="a" style="left:2346px;top:260.7px;" width="23" height="20" viewBox="0 0 23 20"><rect x="0.75" y="0.95" width="20.5" height="17.6" rx="1.6" fill="none" stroke="#869098" stroke-width="1.3"/><rect x="1.9" y="4.4" width="18.2" height="13" fill="none" stroke="#f1f2f3" stroke-width="0.8"/><path d="M0.2 4.4V2.6A2.2 2.2 0 0 1 2.4 0.4H19.6A2.2 2.2 0 0 1 21.8 2.6V4.4Z" fill="#869098"/></svg>
<div class="a" style="left:1306px;top:284.5px;width:1072px;height:34.0px;background:#f4f7f8;border-bottom:1px solid #d3d7da;"></div>
<svg class="a" style="left:1310px;top:289px;" width="33" height="26" viewBox="0 0 33 26"><defs><linearGradient id="fg" x1="0" y1="0" x2="0" y2="1"><stop offset="0" stop-color="#f9e596"/><stop offset="1" stop-color="#e2b94e"/></linearGradient></defs><path d="M3 8.5L6 4.8H14L16 7H23.5V21.5H3Z" fill="#d6ad45" stroke="#b98f28" stroke-width="0.8"/><path d="M6.5 6.8H22V15H6.5Z" fill="#f6f6f6" stroke="#cfcfcf" stroke-width="0.7"/><path d="M1 12.2H19.8L23.6 22.6H4.6Z" fill="url(#fg)" stroke="#c49a2c" stroke-width="0.9" stroke-linejoin="round"/><path d="M14.6 15.2C15.6 10.4 20 8 25.6 8.2V4.4L32 9.7L25.6 15V11.8C21.4 11.5 17.6 12.6 14.6 15.2Z" fill="#24b183" stroke="#149a6c" stroke-width="0.6"/></svg>
<svg class="a" style="left:1353.5px;top:291.8px;" width="22.1" height="23.0" viewBox="0 0 23 24"><path d="M1.5 3.5A2 2 0 0 1 3.5 1.5H19L21.5 4V19.6a2 2 0 0 1-2 2H3.5A2 2 0 0 1 1.5 19.6Z" fill="#65a3e0" stroke="#4f8fd6" stroke-width="1"/><rect x="4.8" y="2.6" width="13.4" height="8.6" rx="0.8" fill="#f2f7fd"/><rect x="5.8" y="13.8" width="11.6" height="7.6" fill="#edf3fb"/><rect x="8" y="15.4" width="3.6" height="6" fill="#65a3e0"/></svg>
<div class="a" style="left:1388px;top:289px;width:1px;height:25px;background:#c6cbd0;box-shadow:1px 0 0 rgba(255,255,255,0.55);"></div>
<svg class="a" style="left:1398px;top:290px;" width="32" height="24" viewBox="0 0 32 24"><rect x="1" y="3.5" width="21" height="18.5" rx="1.5" fill="#fafbfc" stroke="#aab2bd" stroke-width="1.1"/><rect x="1.5" y="4" width="20" height="4.5" fill="#dfe3e8"/><path d="M1 8.5H22M1 13H22M1 17.5H22M8 4V22M15 4V22" stroke="#b7bec8" stroke-width="0.9"/><path d="M13.5 12C14.5 7.5 18.5 5 24 5.5V2.5L30.5 7.5L24 12.5V9.5C20 9 16.5 10 13.5 12Z" fill="#27b07a" stroke="#14935f" stroke-width="0.6"/></svg>
<span class="t f-ui" id="t52" style="left:1432.5px;top:302px;font-size:17px;color:#000;transform:scaleX(0.9774);">Import Dataset</span>
<svg class="a" style="left:1569px;top:301px;" width="9" height="6" viewBox="0 0 9 6"><path d="M0.3 0.6H8.3L4.3 5Z" fill="#111"/></svg>
<div class="a" style="left:1590px;top:289px;width:1px;height:25px;background:#c6cbd0;box-shadow:1px 0 0 rgba(255,255,255,0.55);"></div>
<svg class="a" style="left:1600px;top:287px;" width="30" height="28" viewBox="0 0 30 28"><ellipse cx="12" cy="25.6" rx="8" ry="1.4" fill="#b9bcc0" opacity="0.7"/><path d="M25.3 2.4L17 11" stroke="#d9655b" stroke-width="3.2" stroke-linecap="round"/><path d="M14.1 8.4L18.6 12.7C18 18.9 12.6 24.3 8.1 25.2C4.5 24.3 1.8 21.6 1.8 18.9C6.3 16.2 10.8 12.5 14.1 8.4Z" fill="#ecd08a" stroke="#d2a94e" stroke-width="0.9" stroke-linejoin="round"/><path d="M12.4 10.6L17.2 15.2M11 12.4L16.2 17.4" stroke="#c48a36" stroke-width="1.3"/><path d="M6 22.4L11.2 16.6M9.4 23.8L14 18.6" stroke="#d9b463" stroke-width="0.8"/></svg>
<svg class="a" style="left:2237px;top:294px;" width="20" height="16" viewBox="0 0 20 16"><path d="M1 1.5H19M1 6H19M1 10.5H19M1 15H19" stroke="#b9bdc3" stroke-width="1.4"/></svg>
<span class="t f-ui" id="t53" style="left:2264.0px;top:302px;font-size:17px;color:#000;transform:scaleX(1.0263);">List</span>
<svg class="a" style="left:2305px;top:301px;" width="9" height="6" viewBox="0 0 9 6"><path d="M0.3 0.6H8.3L4.3 5Z" fill="#111"/></svg>
<div class="a" style="left:2326px;top:289px;width:1px;height:25px;background:#c6cbd0;box-shadow:1px 0 0 rgba(255,255,255,0.55);"></div>
<svg class="a" style="left:2336px;top:290px;" width="26" height="25" viewBox="0 0 26 25"><path d="M20.7 13.4A8.2 8.2 0 1 1 17.97 5.42" fill="none" stroke="#b5c3da" stroke-width="5.6"/><path d="M15 3.6L24.4 0.4L24 11Z" fill="#e3eaf6" stroke="#b5c3da" stroke-width="1.1" stroke-linejoin="round"/><path d="M20.6 13.2A8.2 8.2 0 1 1 17.97 5.42" fill="none" stroke="#e3eaf6" stroke-width="3.6"/><path d="M16.4 4.6L22.6 2.6L22.4 8.6Z" fill="#e3eaf6"/></svg>
<svg class="a" style="left:2368px;top:301px;" width="9" height="6" viewBox="0 0 9 6"><path d="M0.3 0.6H8.3L4.3 5Z" fill="#111"/></svg>
<div class="a" style="left:1306px;top:318.5px;width:1072px;height:38.5px;background:#f4f7f8;border-bottom:1px solid #d3d7da;"></div>
<svg class="a" style="left:1313px;top:325px;" width="27" height="24" viewBox="0 0 27 24"><rect x="6.5" y="1" width="14" height="14" rx="2.5" fill="#c06ac9"/><rect x="11.5" y="9.5" width="14" height="13.5" rx="2.5" fill="#5b94e3"/><rect x="1.4" y="6.6" width="14" height="14" rx="2.5" fill="#a9c87c" stroke="#b7d08f" stroke-width="0.6"/></svg>
<span class="t f-ui" id="t54" style="left:1345.5px;top:336.6px;font-size:17px;color:#000;transform:scaleX(0.984);">Global Environment</span>
<svg class="a" style="left:1522px;top:335.5px;" width="9" height="6" viewBox="0 0 9 6"><path d="M0.3 0.6H8.3L4.3 5Z" fill="#111"/></svg>
<div class="a" style="left:2178px;top:326px;width:191.5px;height:27px;background:#fff;border:1px solid #cdd2d6;border-radius:5px;"></div>
<svg class="a" style="left:2189px;top:330px;" width="22" height="21" viewBox="0 0 22 21"><circle cx="8.5" cy="8.5" r="6" fill="none" stroke="#a2aab2" stroke-width="2.8"/><path d="M13 13L19.5 19.5" stroke="#a2aab2" stroke-width="3.6" stroke-linecap="round"/></svg>
<span class="t f-ui" id="t55" style="left:1752.5px;top:425.8px;font-size:17px;color:#000;transform:scaleX(0.9601);">Environment is empty</span>
</section>
<section id="files-pane" aria-label="Files">
<div class="a" style="left:1306px;top:782.5px;width:1071px;height:1012.5px;background:#fff;"></div>
<div class="a" style="left:1306px;top:782.5px;width:1071px;height:32.5px;background:#e6e7e9;"></div>
<div class="a" style="left:1306px;top:814px;width:1071px;height:1px;background:#cfd3d7;"></div>
<div class="a" style="left:1306px;top:782.5px;width:68px;height:32.5px;background:#f4f7f8;border-right:1px solid #cdd1d5;"></div>
<span class="t f-uib" id="t56" style="left:1315.0px;top:795.7px;font-size:17px;color:#000;transform:scaleX(0.9795);">Files</span>
<div class="a" style="left:1374px;top:782.5px;width:74px;height:31.5px;background:#ecedef;border-right:1px solid #d5d8db;"></div>
<span class="t f-uib" id="t57" style="left:1387.0px;top:795.7px;font-size:17px;color:#000;transform:scaleX(0.9955);">Plots</span>
<div class="a" style="left:1448px;top:782.5px;width:116.5px;height:31.5px;background:#ecedef;border-right:1px solid #d5d8db;"></div>
<span class="t f-uib" id="t58" style="left:1463.0px;top:795.7px;font-size:17px;color:#000;transform:scaleX(0.9761);">Packages</span>
<div class="a" style="left:1564.5px;top:782.5px;width:72.5px;height:31.5px;background:#ecedef;border-right:1px solid #d5d8db;"></div>
<span class="t f-uib" id="t59" style="left:1578.5px;top:795.7px;font-size:17px;color:#000;transform:scaleX(1.0168);">Help</span>
<div class="a" style="left:1637px;top:782.5px;width:92.5px;height:31.5px;background:#ecedef;border-right:1px solid #d5d8db;"></div>
<span class="t f-uib" id="t60" style="left:1650.0px;top:795.7px;font-size:17px;color:#000;transform:scaleX(1.0024);">Viewer</span>
<svg class="a" style="left:2317px;top:801px;" width="23" height="11" viewBox="0 0 23 11"><rect x="0.75" y="0.95" width="20.5" height="8.6" rx="1.6" fill="#eff0f2" stroke="#869098" stroke-width="1.3"/><path d="M0.2 5.2V2.6A2.2 2.2 0 0 1 2.4 0.4H19.6A2.2 2.2 0 0 1 21.8 2.6V5.2Z" fill="#869098"/></svg>
<svg class="a" style="left:2346px;top:792px;" width="23" height="20" viewBox="0 0 23 20"><rect x="0.75" y="0.95" width="20.5" height="17.6" rx="1.6" fill="none" stroke="#869098" stroke-width="1.3"/><rect x="1.9" y="4.4" width="18.2" height="13" fill="none" stroke="#f1f2f3" stroke-width="0.8"/><path d="M0.2 4.4V2.6A2.2 2.2 0 0 1 2.4 0.4H19.6A2.2 2.2 0 0 1 21.8 2.6V4.4Z" fill="#869098"/></svg>
<div class="a" style="left:1306px;top:815px;width:1071px;height:35px;background:#f4f7f8;border-bottom:1px solid #d3d7da;"></div>
<svg class="a" style="left:1310px;top:820px;" width="33" height="26" viewBox="0 0 33 26"><defs><linearGradient id="nf" x1="0" y1="0" x2="0" y2="1"><stop offset="0" stop-color="#faeaa6"/><stop offset="1" stop-color="#e6bd4c"/></linearGradient></defs><path d="M17.2 6.4L19.6 3.6H28.4A2.2 2.2 0 0 1 30.6 5.8V22H17.2Z" fill="#fbf3d3" stroke="#d5ae4a" stroke-width="0.9"/><path d="M6.6 8.6H26A1.6 1.6 0 0 1 27.6 10.2V22.6H6.6Z" fill="url(#nf)" stroke="#cfa43c" stroke-width="0.9"/><circle cx="9.1" cy="10.1" r="7.7" fill="#14a468" stroke="#0c8a52" stroke-width="1"/><path d="M9.1 5.8V14.4M4.8 10.1H13.4" stroke="#fff" stroke-width="2.6"/></svg>
<span class="t f-ui" id="t61" style="left:1345.0px;top:833px;font-size:17px;color:#000;transform:scaleX(1.0049);">New Folder</span>
<div class="a" style="left:1456px;top:820px;width:1px;height:25px;background:#c6cbd0;box-shadow:1px 0 0 rgba(255,255,255,0.55);"></div>
<svg class="a" style="left:1466px;top:820px;" width="28" height="26" viewBox="0 0 28 26"><rect x="10.2" y="4.6" width="16.6" height="18.8" fill="#fff" stroke="#c3cad3" stroke-width="1"/><circle cx="9" cy="10.1" r="7.7" fill="#d9a514" stroke="#b58a10" stroke-width="1"/><path d="M9 14.4V9.6H5.6L9 5.4L12.4 9.6H9" fill="#fff" stroke="#fff" stroke-width="1.6" stroke-linejoin="round"/></svg>
<span class="t f-ui" id="t62" style="left:1501.0px;top:833px;font-size:17px;color:#000;transform:scaleX(1.0071);">Upload</span>
<div class="a" style="left:1576px;top:820px;width:1px;height:25px;background:#c6cbd0;box-shadow:1px 0 0 rgba(255,255,255,0.55);"></div>
<svg class="a" style="left:1586px;top:820px;" width="29" height="26" viewBox="0 0 29 26"><rect x="10.4" y="4.2" width="17" height="19" fill="#fff" stroke="#dde0e4" stroke-width="1"/><circle cx="9.2" cy="10.3" r="7.7" fill="#c42424" stroke="#9c1414" stroke-width="1"/><path d="M5.9 7L12.5 13.6M12.5 7L5.9 13.6" stroke="#fff" stroke-width="2.6"/></svg>
<span class="t f-ui" id="t63" style="left:1622.0px;top:833px;font-size:17px;color:#000;transform:scaleX(0.9667);">Delete</span>
<svg class="a" style="left:1694px;top:822px;" width="27" height="24" viewBox="0 0 27 24"><rect x="1.4" y="2.2" width="14.6" height="16" fill="#fdfdfe" stroke="#cdd3da" stroke-width="1"/><rect x="10.2" y="5.4" width="15.2" height="16.4" fill="#fff" stroke="#b9c0c9" stroke-width="1"/><path d="M7 11H14V7.6L20.4 13.2L14 18.8V15.4H7Z" fill="#22a1e4"/></svg>
<span class="t f-ui" id="t64" style="left:1726.0px;top:833px;font-size:17px;color:#000;transform:scaleX(0.9682);">Rename</span>
<div class="a" style="left:1810px;top:820px;width:1px;height:25px;background:#c6cbd0;box-shadow:1px 0 0 rgba(255,255,255,0.55);"></div>
<svg class="a" style="left:1823px;top:820px;" width="27" height="27" viewBox="0 0 27 27"><defs><radialGradient id="gg" cx="0.4" cy="0.35" r="0.75"><stop offset="0" stop-color="#7cc6ea"/><stop offset="1" stop-color="#2f8cc0"/></radialGradient></defs><g transform="translate(13.3 12.8)"><g fill="url(#gg)" stroke="#3a8fbd" stroke-width="0.6"><rect x="-2.7" y="-12.3" width="5.4" height="24.6" rx="1.6"/><rect x="-2.7" y="-12.3" width="5.4" height="24.6" rx="1.6" transform="rotate(45)"/><rect x="-2.7" y="-12.3" width="5.4" height="24.6" rx="1.6" transform="rotate(90)"/><rect x="-2.7" y="-12.3" width="5.4" height="24.6" rx="1.6" transform="rotate(135)"/></g><circle r="8.8" fill="url(#gg)"/><circle r="5" fill="none" stroke="#8fd0ee" stroke-width="1.2"/><circle r="3.4" fill="#f2f7f9" stroke="#3a8fbd" stroke-width="0.8"/></g></svg>
<span class="t f-ui" id="t65" style="left:1854.5px;top:833px;font-size:17px;color:#000;transform:scaleX(1.02);">More</span>
<svg class="a" style="left:1908px;top:831.5px;" width="9" height="6" viewBox="0 0 9 6"><path d="M0.3 0.6H8.3L4.3 5Z" fill="#111"/></svg>
<svg class="a" style="left:2350px;top:820px;" width="26" height="25" viewBox="0 0 26 25"><path d="M20.7 13.4A8.2 8.2 0 1 1 17.97 5.42" fill="none" stroke="#b5c3da" stroke-width="5.6"/><path d="M15 3.6L24.4 0.4L24 11Z" fill="#e3eaf6" stroke="#b5c3da" stroke-width="1.1" stroke-linejoin="round"/><path d="M20.6 13.2A8.2 8.2 0 1 1 17.97 5.42" fill="none" stroke="#e3eaf6" stroke-width="3.6"/><path d="M16.4 4.6L22.6 2.6L22.4 8.6Z" fill="#e3eaf6"/></svg>
<div class="a" style="left:1306px;top:850px;width:1071px;height:33px;background:#f4f7f8;border-bottom:1px solid #d3d7da;"></div>
<div class="a" style="left:1309.5px;top:857px;width:20.0px;height:20px;background:#fff;border:1px solid #b4b4b4;border-radius:4px;"></div>
<svg class="a" style="left:1340px;top:852px;" width="30" height="27" viewBox="0 0 30 27"><path d="M5 13V25.5H24V13" fill="#f2f0ee" stroke="#b9b5b0" stroke-width="1"/><path d="M1.5 14.5L14.5 2L27.5 14.5" fill="none" stroke="#d23a2a" stroke-width="3.2" stroke-linejoin="miter"/><rect x="11" y="16" width="6.5" height="9.5" fill="#a86a3a"/></svg>
<span class="t f-ui" id="t66" style="left:1378.0px;top:868px;font-size:17px;color:#154fc6;transform:scaleX(1.0059);">Home</span>
<svg class="a" style="left:1436px;top:862px;" width="12" height="16" viewBox="0 0 12 16"><path d="M2 1.5L9.5 8L2 14.5" fill="none" stroke="#c3c8ce" stroke-width="1.4"/></svg>
<span class="t f-ui" id="t67" style="left:1454.5px;top:868px;font-size:17px;color:#154fc6;transform:scaleX(1.0036);">dc_genomics_r</span>
<svg class="a" style="left:2315.5px;top:853px;" width="25.0" height="24.5" viewBox="0 0 25 24.5"><path d="M12.5 1L23.5 5.2V18.6L12.5 23.5L1.5 18.6V5.2Z" fill="#bfe6f4" stroke="#6cc0de" stroke-width="1"/><path d="M1.5 5.2L12.5 9.6L23.5 5.2M12.5 9.6V23.5" fill="none" stroke="#7fcbe5" stroke-width="0.9"/><path d="M12.5 1V14L1.5 18.6M12.5 14L23.5 18.6" fill="none" stroke="#9ad6ea" stroke-width="0.7"/></svg>
<span class="t f-serif" id="t68" style="left:2322.7px;top:864.2px;font-size:15.0px;color:#2b65b5;">R</span>
<div class="a" style="left:2351px;top:851px;width:1px;height:31px;background:#d8dcdf;box-shadow:1px 0 0 rgba(255,255,255,0.55);"></div>
<span class="t f-ui" id="t69" style="left:2359.5px;top:867px;font-size:17px;color:#000;transform:scaleX(1.0173);">...</span>
<div class="a" style="left:1306px;top:883px;width:1071px;height:29.5px;background:#f4f7f8;border-bottom:1px solid #d3d7da;"></div>
<div class="a" style="left:1348px;top:884px;width:1px;height:28px;background:#d8dcdf;box-shadow:1px 0 0 rgba(255,255,255,0.55);"></div>
<div class="a" style="left:1388px;top:884px;width:1px;height:28px;background:#d8dcdf;box-shadow:1px 0 0 rgba(255,255,255,0.55);"></div>
<div class="a" style="left:2002px;top:884px;width:1px;height:28px;background:#d8dcdf;box-shadow:1px 0 0 rgba(255,255,255,0.55);"></div>
<div class="a" style="left:2128px;top:884px;width:1px;height:28px;background:#d8dcdf;box-shadow:1px 0 0 rgba(255,255,255,0.55);"></div>
<svg class="a" style="left:1397px;top:890px;" width="16" height="12" viewBox="0 0 16 12"><path d="M1 11L8 1L15 11Z" fill="#7b8590"/></svg>
<span class="t f-ui" id="t70" style="left:1419.5px;top:898px;font-size:17.2px;color:#3a4650;transform:scaleX(0.9661);">Name</span>
<span class="t f-ui" id="t71" style="left:2005.5px;top:898px;font-size:17.2px;color:#3a4650;transform:scaleX(1.0058);">Size</span>
<span class="t f-ui" id="t72" style="left:2132.5px;top:898px;font-size:17.2px;color:#3a4650;transform:scaleX(1.0089);">Modified</span>
<svg class="a" style="left:1358px;top:917px;" width="24" height="23" viewBox="0 0 24 23"><path d="M9.4 1.2L17.4 10.3H14V17.2H21.8V21.6H6.5V10.3H1.2Z" fill="#30c47e" stroke="#1faa66" stroke-width="0.9" stroke-linejoin="round"/></svg>
<span class="t f-ui" id="t73" style="left:1394.5px;top:933px;font-size:18.6px;color:#12129e;transform:scaleX(1.0991);">..</span>
<div class="a" style="left:1314px;top:956px;width:20.5px;height:20.5px;background:#fff;border:1px solid #b4b4b4;border-radius:4px;"></div>
<svg class="a" style="left:1357.5px;top:953.5px;" width="25.0" height="24.5" viewBox="0 0 25 24.5"><path d="M12.5 1L23.5 5.2V18.6L12.5 23.5L1.5 18.6V5.2Z" fill="#bfe6f4" stroke="#6cc0de" stroke-width="1"/><path d="M1.5 5.2L12.5 9.6L23.5 5.2M12.5 9.6V23.5" fill="none" stroke="#7fcbe5" stroke-width="0.9"/><path d="M12.5 1V14L1.5 18.6M12.5 14L23.5 18.6" fill="none" stroke="#9ad6ea" stroke-width="0.7"/></svg>
<span class="t f-serif" id="t74" style="left:1364.7px;top:964.7px;font-size:15.0px;color:#2b65b5;">R</span>
<span class="t f-ui" id="t75" style="left:1394.0px;top:968px;font-size:18.6px;color:#12129e;transform:scaleX(1.0128);">dc_genomics_r.Rproj</span>
<span class="t f-ui" id="t76" style="left:2007.5px;top:968px;font-size:18.6px;color:#000;transform:scaleX(0.9971);">205 B</span>
<span class="t f-ui" id="t77" style="left:2134.0px;top:968px;font-size:18.6px;color:#000;transform:scaleX(1.0035);">Nov 10, 2020, 3:09 PM</span>
<div class="a" style="left:1314px;top:991px;width:20.5px;height:20.5px;background:#fff;border:1px solid #b4b4b4;border-radius:4px;"></div>
<svg class="a" style="left:1356px;top:986px;" width="27" height="26" viewBox="0 0 27 26"><path d="M5.5 1.5H18L25 8.5V24.5H5.5Z" fill="#fdfdfd" stroke="#b9bcc0" stroke-width="1"/><path d="M18 1.5V8.5H25" fill="#eceef0" stroke="#b9bcc0" stroke-width="1"/><circle cx="8.5" cy="11.6" r="6.9" fill="#4272b4"/></svg>
<span class="t f-uib" id="t78" style="left:1360.6px;top:997.3px;font-size:10.6px;color:#fff;">R</span>
<span class="t f-ui" id="t79" style="left:1394.0px;top:1003px;font-size:18.6px;color:#12129e;transform:scaleX(0.9942);">genomics_r_basics.R</span>
<span class="t f-ui" id="t80" style="left:2007.5px;top:1003px;font-size:18.6px;color:#000;transform:scaleX(0.9934);">0 B</span>
<span class="t f-ui" id="t81" style="left:2134.0px;top:1003px;font-size:18.6px;color:#000;transform:scaleX(1.0035);">Nov 10, 2020, 3:10 PM</span>
</section>
</main>
<div id="annotations" aria-label="Pane annotations">
<div class="a" style="left:5px;top:243px;width:1290px;height:870px;border:7px solid #fe0000;border-radius:3px;"></div>
<div class="a" style="left:5px;top:1114.3px;width:1288px;height:683.7px;border:7px solid #fe0000;border-radius:3px;"></div>
<div class="a" style="left:1299px;top:243.8px;width:1086px;height:525.8px;border:7px solid #fe0000;border-radius:3px;"></div>
<div class="a" style="left:1299px;top:775px;width:1085px;height:1026.8px;border:7px solid #fe0000;border-radius:3px;"></div>
<span class="t f-sfb" id="t82" style="left:398.68px;top:643px;font-size:143px;color:#fe0000;transform:scaleX(0.9833);">Source</span>
<span class="t f-sfb" id="t83" style="left:1507.77px;top:526px;font-size:69.8px;color:#fe0000;transform:scaleX(1.0035);">Environment</span>
<span class="t f-sfb" id="t84" style="left:1936.42px;top:529.78px;font-size:77.28px;color:#fe0000;transform-origin:0 27px;transform:skewX(-9.3deg) scaleX(1.0617);">/</span>
<span class="t f-sfb" id="t85" style="left:1967.7px;top:526px;font-size:69.8px;color:#fe0000;transform:scaleX(1.0196);">History</span>
<span class="t f-sfb" id="t86" style="left:1341.7px;top:1347.75px;font-size:69.1px;color:#fe0000;transform:scaleX(0.9755);">Files</span>
<span class="t f-sfb" id="t87" style="left:1526.11px;top:1347.75px;font-size:69.1px;color:#fe0000;transform:scaleX(0.9948);">Plots</span>
<span class="t f-sfb" id="t88" style="left:1725.29px;top:1347.75px;font-size:69.1px;color:#fe0000;transform:scaleX(1.0097);">Pkgs</span>
<span class="t f-sfb" id="t89" style="left:1923.23px;top:1347.75px;font-size:69.1px;color:#fe0000;transform:scaleX(1.0235);">Help</span>
<span class="t f-sfb" id="t90" style="left:2110.71px;top:1347.75px;font-size:69.1px;color:#fe0000;transform:scaleX(1.0395);">Viewer</span>
<span class="t f-sfb" id="t91" style="left:1494.42px;top:1352.03px;font-size:77.28px;color:#fe0000;transform-origin:0 27px;transform:skewX(-9.3deg) scaleX(1.0617);">/</span>
<span class="t f-sfb" id="t92" style="left:1693.18px;top:1352.03px;font-size:77.28px;color:#fe0000;transform-origin:0 27px;transform:skewX(-9.54deg) scaleX(1.0617);">/</span>
<span class="t f-sfb" id="t93" style="left:1891.93px;top:1352.03px;font-size:77.28px;color:#fe0000;transform-origin:0 27px;transform:skewX(-9.54deg) scaleX(1.0617);">/</span>
<span class="t f-sfb" id="t94" style="left:2076.91px;top:1352.03px;font-size:77.28px;color:#fe0000;transform-origin:0 27px;transform:skewX(-8.81deg) scaleX(1.0617);">/</span>
<span class="t f-sfb" id="t95" style="left:101.37px;top:1406.6px;font-size:91.5px;color:#fe0000;transform:scaleX(0.9906);">Console</span>
<span class="t f-sfb" id="t96" style="left:502.57px;top:1406.6px;font-size:91.5px;color:#fe0000;transform:scaleX(1.0357);">Terminal</span>
<span class="t f-sfb" id="t97" style="left:931.11px;top:1406.6px;font-size:91.5px;color:#fe0000;transform:scaleX(1.0137);">Jobs</span>
<span class="t f-sfb" id="t98" style="left:459.24px;top:1413.55px;font-size:102.82px;color:#fe0000;transform-origin:0 35px;transform:skewX(-10.33deg) scaleX(1.0806);">/</span>
<span class="t f-sfb" id="t99" style="left:887.96px;top:1413.55px;font-size:102.82px;color:#fe0000;transform-origin:0 35px;transform:skewX(-9.42deg) scaleX(1.0806);">/</span>
</div>
</body></html>
